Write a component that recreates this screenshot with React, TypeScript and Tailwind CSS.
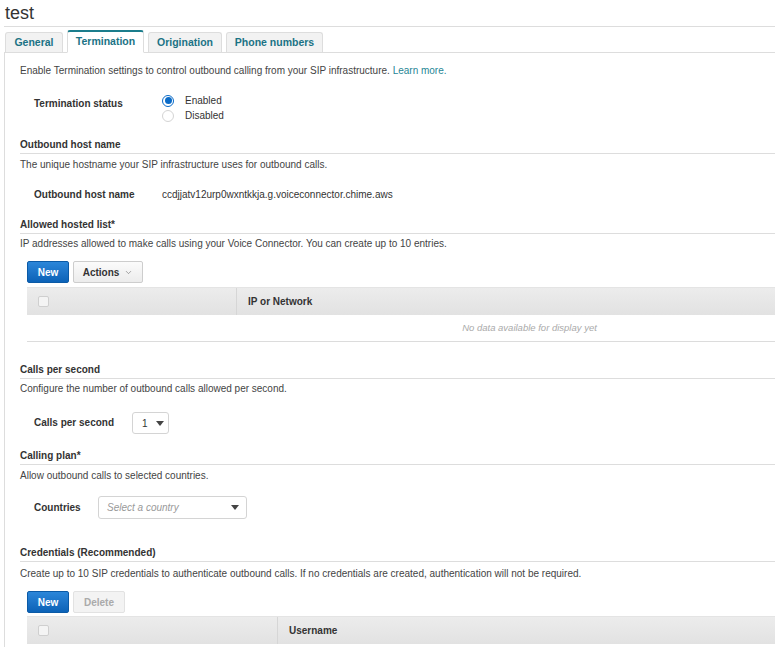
import { ChevronDown } from 'lucide-react'

/* ── Small pieces ─────────────────────────────────────────────── */

function Tab({ label, active, width }: { label: string; active?: boolean; width: string }) {
  if (active) {
    return (
      <div
        className={`${width} h-[23px] -mb-px flex items-center justify-center bg-white border border-[#ddd] border-t-2 border-t-[#1b7d8c] border-b-white rounded-t-[3px] text-[10.5px] font-bold text-[#1b7385]`}
      >
        {label}
      </div>
    )
  }
  return (
    <div
      className={`${width} h-[20px] flex items-center justify-center bg-[#f2f2f2] border border-[#ddd] border-b-0 rounded-t-[3px] text-[10.5px] font-bold text-[#1b7385]`}
    >
      {label}
    </div>
  )
}

function Heading({ children, mt }: { children: React.ReactNode; mt: string }) {
  return (
    <div className={`${mt} pb-px leading-[14px] border-b border-[#ddd] text-[10px] font-bold text-[#333]`}>
      {children}
    </div>
  )
}

function Desc({ children, mt }: { children: React.ReactNode; mt: string }) {
  return <p className={`${mt} leading-[14px] text-[10px] text-[#444]`}>{children}</p>
}

function PrimaryButton({ children }: { children: React.ReactNode }) {
  return (
    <button className="h-[22px] w-[42px] rounded-[2px] border border-[#0b5aa6] bg-gradient-to-b from-[#2b86d9] to-[#0b62b7] text-[10px] font-bold text-white">
      {children}
    </button>
  )
}

function Checkbox() {
  return <span className="block w-[11px] h-[11px] rounded-[2px] border border-[#cfcfcf] bg-[#f4f4f4]" />
}

function TableHead({ label, split }: { label: string; split: string }) {
  return (
    <div className="flex h-[28px] bg-gradient-to-b from-[#ececec] to-[#e2e2e2] border-t border-[#e4e4e4]">
      <div className={`${split} flex items-center pl-[11px] border-r border-[#d6d6d6]`}>
        <Checkbox />
      </div>
      <div className="flex items-center pl-[11px] text-[10px] font-bold text-[#333]">{label}</div>
    </div>
  )
}

function Caret() {
  return (
    <svg width="8" height="5" viewBox="0 0 8 5">
      <path d="M0 0 L8 0 L4 5 Z" fill="#444" />
    </svg>
  )
}

/* ── Page ─────────────────────────────────────────────────────── */

export default function App() {
  return (
    <div className="w-[775px] h-[647px] overflow-hidden bg-white text-[#333] font-['Liberation_Sans',Arial,sans-serif]">
      <div className="pl-[4px]">
        {/* Title */}
        <h1 className="h-[27px] pl-px leading-[26px] text-[18px] border-b border-[#ddd]">test</h1>

        {/* Tabs */}
        <div className="mt-[4px] flex items-end gap-[4px] pl-px border-b border-[#ddd] h-[22px]">
          <Tab label="General" width="w-[58px]" />
          <Tab label="Termination" width="w-[77px]" active />
          <Tab label="Origination" width="w-[74px]" />
          <Tab label="Phone numbers" width="w-[97px]" />
        </div>

        {/* Panel */}
        <div className="border-l border-[#ddd] pl-[15px] h-[600px]">
          <p className="pt-[11px] leading-[14px] text-[10px] text-[#444]">
            Enable Termination settings to control outbound calling from your SIP infrastructure.{' '}
            <span className="text-[#1f8696]">Learn more.</span>
          </p>

          {/* Termination status */}
          <div className="mt-[15px] flex pl-[14px]">
            <div className="w-[128px] mt-[4px] leading-[14px] text-[10px] font-bold">Termination status</div>
            <div className="flex flex-col">
              <label className="h-[15px] flex items-center gap-[11px] text-[10px] text-[#333]">
                <span className="w-[12px] h-[12px] rounded-full border border-[#0a6bc8] flex items-center justify-center bg-white">
                  <span className="w-[7px] h-[7px] rounded-full bg-[#0a6bc8]" />
                </span>
                Enabled
              </label>
              <label className="h-[15px] flex items-center gap-[11px] text-[10px] text-[#333]">
                <span className="w-[12px] h-[12px] rounded-full border border-[#d4d4d4] bg-white" />
                Disabled
              </label>
            </div>
          </div>

          {/* Outbound host name */}
          <Heading mt="mt-[15px]">Outbound host name</Heading>
          <Desc mt="mt-[4px]">The unique hostname your SIP infrastructure uses for outbound calls.</Desc>
          <div className="mt-[16px] flex pl-[14px] leading-[14px] text-[10px]">
            <div className="w-[128px] font-bold">Outbound host name</div>
            <div className="text-[#333]">ccdjjatv12urp0wxntkkja.g.voiceconnector.chime.aws</div>
          </div>

          {/* Allowed hosted list */}
          <Heading mt="mt-[16px]">Allowed hosted list*</Heading>
          <Desc mt="mt-[3px]">
            IP addresses allowed to make calls using your Voice Connector. You can create up to 10 entries.
          </Desc>
          <div className="mt-[10px] pl-[7px]">
            <div className="flex gap-[4px]">
              <PrimaryButton>New</PrimaryButton>
              <button className="h-[22px] w-[70px] flex items-center justify-center gap-[5px] rounded-[2px] border border-[#cdcdcd] bg-gradient-to-b from-[#fbfbfb] to-[#ececec] text-[10px] font-bold text-[#333]">
                Actions
                <ChevronDown className="w-[9px] h-[9px] text-[#666]" strokeWidth={1.5} />
              </button>
            </div>
            <div className="mt-[4px]">
              <TableHead label="IP or Network" split="w-[210px]" />
              <div className="h-[27px] flex items-center justify-center pl-[257px] border-b border-[#dcdcdc] text-[9.5px] italic text-[#aaa]">
                No data available for display yet
              </div>
            </div>
          </div>

          {/* Calls per second */}
          <Heading mt="mt-[21px]">Calls per second</Heading>
          <Desc mt="mt-[3px]">Configure the number of outbound calls allowed per second.</Desc>
          <div className="mt-[16px] flex items-center pl-[14px]">
            <div className="w-[98px] text-[10px] font-bold leading-[14px]">Calls per second</div>
            <div className="w-[37px] h-[22px] flex items-center gap-[8px] pl-[9px] rounded-[3px] border border-[#d4d4d4] text-[10px] text-[#333]">
              1
              <Caret />
            </div>
          </div>

          {/* Calling plan */}
          <Heading mt="mt-[15px]">Calling plan*</Heading>
          <Desc mt="mt-[4px]">Allow outbound calls to selected countries.</Desc>
          <div className="mt-[13px] flex items-center pl-[14px]">
            <div className="w-[64px] text-[10px] font-bold leading-[14px]">Countries</div>
            <div className="w-[149px] h-[23px] flex items-center justify-between pl-[8px] pr-[7px] rounded-[3px] border border-[#d4d4d4] text-[10px] italic text-[#999]">
              Select a country
              <Caret />
            </div>
          </div>

          {/* Credentials */}
          <Heading mt="mt-[27px]">Credentials (Recommended)</Heading>
          <Desc mt="mt-[5px]">
            Create up to 10 SIP credentials to authenticate outbound calls. If no credentials are created,
            authentication will not be required.
          </Desc>
          <div className="mt-[10px] pl-[7px]">
            <div className="flex gap-[4px]">
              <PrimaryButton>New</PrimaryButton>
              <button className="h-[22px] w-[52px] rounded-[2px] border border-[#e2e2e2] bg-[#f3f3f3] text-[10px] font-bold text-[#aaa]">
                Delete
              </button>
            </div>
            <div className="mt-[3px]">
              <TableHead label="Username" split="w-[251px]" />
            </div>
          </div>
        </div>
      </div>
    </div>
  )
}
